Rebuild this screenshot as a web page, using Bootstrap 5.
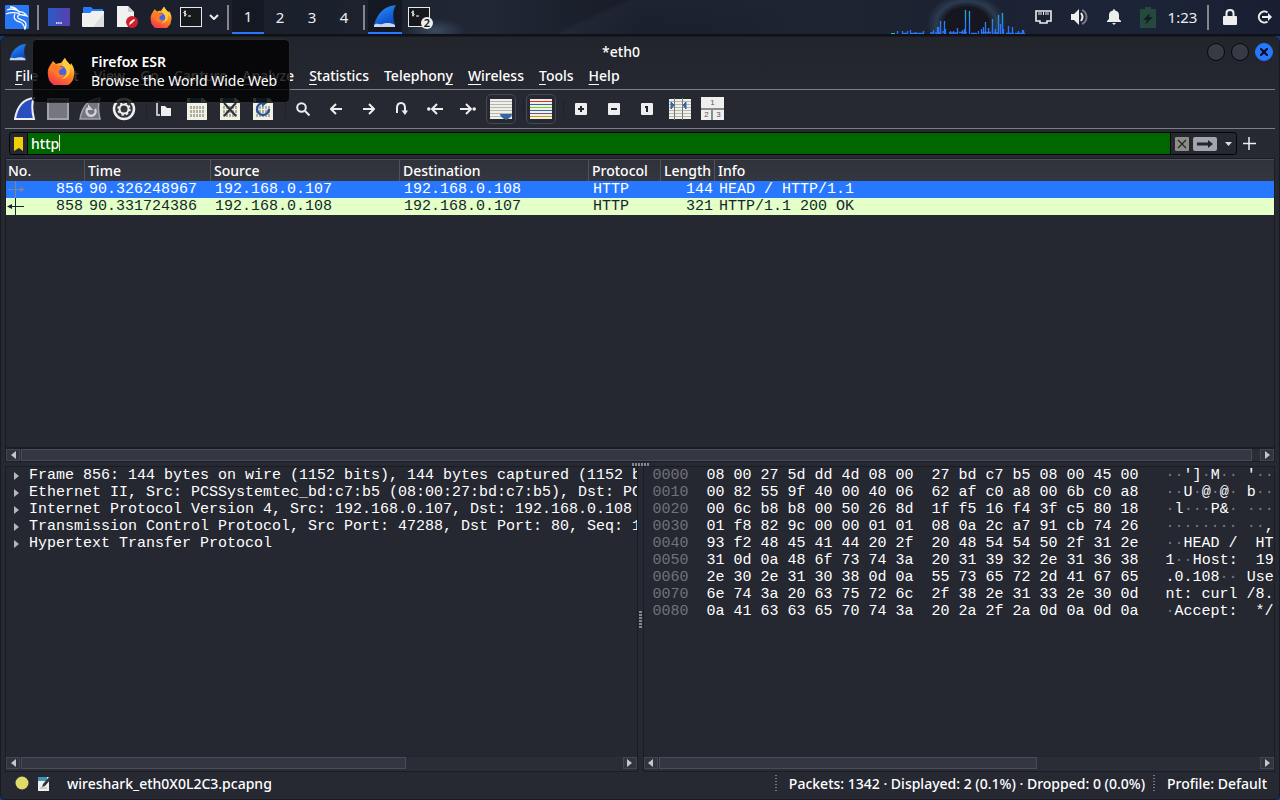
<!DOCTYPE html>
<html lang="en" data-bs-theme="dark">
<head>
<meta charset="utf-8">
<meta name="viewport" content="width=device-width, initial-scale=1">
<title>*eth0</title>
<link href="https://cdn.jsdelivr.net/npm/bootstrap@5.3.0/dist/css/bootstrap.min.css" rel="stylesheet">
<style>
:root{--win:#252731;--hair:#7c7e86;--edge:#181a21;--accent:#2777ff}
body{font-family:"Noto Sans",sans-serif;font-size:14px;line-height:18px;color:#fff;background:#15397a}
button{color:inherit;background:none;border:0;padding:0;font:inherit}
svg{display:block;flex:none}
.desk-panel{height:36px;font-size:15px;border-bottom:2px solid #101116;background:radial-gradient(ellipse 40px 30px at 75.500% 70%,#15161f 0 55%,#2b3b50 75%,transparent),radial-gradient(ellipse 30px 12px at 34% 90%,#3a4a60,transparent),linear-gradient(155deg,transparent 46%,#33425533 47%,transparent 60%),linear-gradient(90deg,#1d202c 0,#1b202d 25%,#212735 38%,#171b27 50%,#1d2532 62%,#1b2130 75%,#1c2438 88%,#191f33 100%);color:#eee}
.desk-panel .rule{width:2px;height:25px;margin:0 3px;background:#85868a}
.desk-panel .slot{display:flex;align-items:center;justify-content:center;height:34px}
.w20{width:20px}.w26{width:26px}.w32{width:32px}.w34{width:34px}.w36{width:36px}.w39{width:39px}
.slot.active{background:#141823;border-bottom:2px solid var(--accent)}
.win{background:linear-gradient(#22252c,#262832 60px);border:1px solid var(--edge);border-radius:7px 7px 5px 5px;padding:0 4px}
.titlebar{height:29px}
.win-btns{gap:6px;padding-right:2px}
.dot-btn{width:18px;height:18px;border:1px solid #08090c;border-radius:50%;background:#383b46}
.dot-btn.close-btn{background:#2777ff;border-color:#2777ff}
.menu-row{height:24px;gap:15px;padding:0 0 3px 10px;border-bottom:1px solid var(--hair)}
.menu-row,.med{font-weight:500}
.menu-row u{text-underline-offset:3px;text-decoration-thickness:1px}
.tools{height:39px;padding:0 0 1px 3px;border-bottom:1px solid var(--hair)}
.tool{width:33px;height:30px;display:flex;align-items:center;justify-content:center}
.tool.on svg{outline:1px solid #464953;outline-offset:3px;border-radius:1px}
.tools .gap-bar{width:7px;height:18px;border-right:1px solid #20222a}
.filter{margin-left:4px;height:23px;border:1px solid #050507;border-radius:3px;background:#262831;overflow:hidden}
.filter input{background:linear-gradient(#ddd,#ddd) 31px 2px/1px 16px no-repeat #060;border:0;color:#fff;padding:0 3px;font-weight:500;outline:0;min-width:0;height:21px;border-left:1px solid #050507;border-right:1px solid #050507}
.filter-row{height:29px}
.plus-btn{margin:0 19px 0 5px}
.pane-top{flex:289 1 0}.pane-low{flex:307 1 0}.pane-half{flex:1 1 0}
.view{border:1px solid #1b1d24;background:var(--win);min-width:0}
.mono{font-family:"Liberation Mono",monospace;font-size:15px;line-height:17px}
.packets{table-layout:fixed;width:100%;border-collapse:separate;border-spacing:0}
.packets th{height:22px;padding:2px 0 0 3px;font-weight:500;line-height:18px;background:linear-gradient(#2f323b,#343640);border-top:1px solid #4d4f58;border-right:1px solid #50525b;white-space:nowrap;vertical-align:top}
.packets th:first-child{padding-left:2px}
.packets th:last-child{border-right:0}
.packets td{height:17px;padding:0 0 0 4px;font:15px/17px "Liberation Mono",monospace;white-space:pre;vertical-align:top}
.packets .num{text-align:right;padding:0 2px 0 0}
.packets .sel{background:#2777ff}
.packets .resp{background:#e4ffc7;color:#12272e}
.sbar{height:14px;background:#2b2d36;border:1px solid #1b1d24}
.sbar button{width:14px;height:12px;background:#31343d;border:1px solid #454750;display:flex;align-items:center;justify-content:center}
.sbar .thumb{height:12px;background:#343741;border:1px solid #4b4d56;margin-left:1px}
.splitter-h{height:4px}.splitter-v{width:5px}
.grip-h{width:17px;height:3px;background:repeating-linear-gradient(90deg,#85878e 0 2px,transparent 2px 3px)}
.grip-v{width:3px;height:17px;background:repeating-linear-gradient(#85878e 0 2px,transparent 2px 3px)}
.tree li{display:flex;align-items:center;white-space:pre}
.tree svg{margin:0 10px 0 8px}
.hex{color:#fff;padding:0 0 0 9px;margin:0;overflow:hidden}
.hex .off{color:#70737a}.hex i{font-style:normal;color:#777a82}
.status{height:27px;padding-bottom:3px}
.dotted{width:2px;height:18px;background:repeating-linear-gradient(#777982 0 1px,transparent 1px 3px)}
.tip{position:absolute;left:32px;top:39px;width:258px;height:64px;background:#000000cc;border:1px solid #2a2b2f;border-radius:5px;padding:0 14px;line-height:19px;white-space:nowrap;z-index:5}
.count{position:absolute;left:13px;top:10px;width:12px;height:12px;border-radius:50%;background:#eee;color:#111;font-size:11px;line-height:12px;text-align:center;font-weight:600}
</style>
</head>
<body class="d-flex flex-column min-vh-100">
<svg width="0" height="0" class="position-absolute" aria-hidden="true">
<defs>
<linearGradient id="fin" x1="0" y1="0" x2="0.6" y2="1"><stop offset="0" stop-color="#2d9bff"/><stop offset="1" stop-color="#0b48c4"/></linearGradient>
<linearGradient id="fox" x1="0.8" y1="0" x2="0.3" y2="1"><stop offset="0" stop-color="#ffe14a"/><stop offset=".45" stop-color="#ff8a1f"/><stop offset="1" stop-color="#f5304f"/></linearGradient>
<linearGradient id="desk" x2="1"><stop offset="0" stop-color="#2b5ac4"/><stop offset="1" stop-color="#5a3fb0"/></linearGradient>
<linearGradient id="net" gradientUnits="userSpaceOnUse" x1="0" y1="0" x2="0" y2="20"><stop offset="0" stop-color="#1dbecb"/><stop offset="1" stop-color="#2777ff"/></linearGradient>
<symbol id="firefox" viewBox="0 0 28 28"><path d="M4 7l2-3 3 3c2-1 4-1 5-1l4-5c1 3 3 4 5 7 1-1 1-1 1-2 3 4 4 8 3 12a13 12 0 0 1-26 0C0 13 2 10 4 7z" fill="url(#fox)"/><circle cx="14.500" cy="14.500" r="5.500" fill="#4a63e0"/><path d="M2 12c2-4 5-5 7-5l3 3 4 0c0 2-3 2-4 4-1 4 3 5 7 3-3 5-12 5-12-2-2-1-4-1-5-3z" fill="#ff7b25"/><path d="M18 1c1 4 7 6 8 13-1-2-2-3-3-3 1 7-4 11-9 11 7-3 7-9 2-13-1-4 0-6 2-8z" fill="#ffcb3d"/></symbol>
<symbol id="shark" viewBox="0 0 24 24"><path d="M1 21C4 10 11 2 23 1c-4 6-3 13-1 20z" fill="url(#fin)"/><path d="M1 21c3-3 5 0 8-1s8-2 13 1v2H1z" fill="#c7d5ee"/></symbol>
<symbol id="page" viewBox="0 0 20 22"><path d="M0 0h16l4 4v18H0z" fill="#f1f1e4"/><path d="M3 0h11v4H3z" fill="#3a7896"/><path d="M4 8v3M7 8v3M10 8v3M13 8v3M16 8v3M4 12v3M7 12v3M10 12v3M13 12v3M16 12v3M4 16v3M7 16v3M10 16v3M13 16v3M16 16v3" stroke="#96978e" stroke-width="1.500"/></symbol>
<symbol id="term" viewBox="0 0 22 20"><rect x=".5" y=".5" width="21" height="19" fill="#16181b" stroke="#e8e8e8"/><path d="M6 5c-1-1-3 0-2 1l2 1c1 1-1 2-2 1M5 3.500v6M8 9h3" fill="none" stroke="#fff"/></symbol>
</defs>
</svg>

<header class="desk-panel d-flex align-items-center">
<button class="slot w34" aria-label="Applications"><svg width="26" height="26" viewBox="0 0 26 26"><rect x="1" y="1" width="24" height="24" rx="1" fill="#2878f5"/><path d="M3 6c5-2 9-1 13 2M2 10c5-2 9-2 14 0M6 3c5 0 7 2 9 5 4-1 6 1 8 4l-4-1c-4-1-6 0-5 3 1 2 5 1 7 4 2 2 1 4 0 7-1-4-2-6-5-7-5-1-7-4-5-8" fill="none" stroke="#fff" stroke-width="1.300"/></svg></button>
<span class="rule"></span>
<button class="slot w34" aria-label="Show desktop"><svg width="22" height="18" viewBox="0 0 22 18"><path d="M0 0h22v18H0z" fill="url(#desk)"/><path d="M8 15h6" stroke="#fff" stroke-width="1.500" stroke-dasharray="1.500 .7"/></svg></button>
<button class="slot w34" aria-label="Files"><svg width="22" height="20" viewBox="0 0 22 20"><path d="M1 6V1q0-1 1-1h7l2 2h10v4z" fill="#2777ff"/><path d="M0 6h8l2-2h12v15q0 1-1 1H1q-1 0-1-1z" fill="#f0f0f0"/><path d="M22 6v14H11z" fill="#ddd"/></svg></button>
<button class="slot w34" aria-label="Text editor"><svg width="22" height="24" viewBox="0 0 22 24"><path d="M1 1h11l6 6v15H1z" fill="#f1f1f1"/><path d="M12 1l6 6h-6z" fill="#ccc"/><circle cx="16" cy="17" r="6" fill="#d01e2a"/><path d="M13 20l1-3 4-3 1 1-4 4z" fill="#fff"/></svg></button>
<button class="slot w34" aria-label="Firefox ESR"><svg width="22" height="22"><use href="#firefox"/></svg></button>
<button class="slot w26" aria-label="Terminal"><svg width="22" height="20"><use href="#term"/></svg></button>
<button class="slot w20" aria-label="More terminals"><svg width="10" height="6" viewBox="0 0 10 6"><path d="M1 1l4 4 4-4" fill="none" stroke="#eee" stroke-width="2"/></svg></button>
<span class="rule"></span>
<button class="slot w32 active">1</button><button class="slot w32">2</button><button class="slot w32">3</button><button class="slot w32">4</button>
<span class="rule"></span>
<button class="slot w34 active" aria-label="Wireshark window"><svg width="24" height="24"><use href="#shark"/></svg></button>
<button class="slot w34" aria-label="Terminal windows"><span class="position-relative"><svg width="22" height="20"><use href="#term"/></svg><span class="count">2</span></span></button>
<svg class="ms-auto align-self-end" width="134" height="26" viewBox="0 0 134 26"><path fill="none" stroke="#1dbecb" d="M0 25.500h4"/><path fill="none" stroke="url(#net)" stroke-width="1.300" d="M6.500 26v-3M11.500 26v-3M12 25.500h4M16.500 26v-3M19.500 26v-4M20 25.500h13M24.500 26v-2M32.500 26v-3M39 25h4M42.500 26v-4M44 25h6M46.500 26v-7M47.500 26v-7M49.500 26v-13M51 24h4M53.500 26v-13M54.500 26v-5M58 25h8M59.500 26v-3M62.500 26v-3M66.500 26v-6M68 24.500h8M71.500 26v-4M73.500 26v-5M74.500 26V2M78.500 26V3M80 25.500h6M87.500 26v-3M90 24.500h10M90.500 26v-5M92.500 26v-7M94.500 26v-12M97.500 26v-6M101.500 26V11M103 25h5M104.500 26v-5M107.500 26V7M109.500 26v-10M111.500 26V5M112.500 26v-5M115 25.500h8M117.500 26v-8M121.500 26v-7M124 25.500h10M127.500 26v-3M131.500 26v-4M132.500 26v-4"/></svg>
<button class="slot w36" aria-label="Network"><svg width="17" height="14" viewBox="0 0 17 14"><path d="M1 1h15v10h-4v2H5v-2H1z" fill="none" stroke="#eee" stroke-width="1.600"/><path d="M4 2v3M6 2v3M8.500 2v3M11 2v3M13 2v3" stroke="#eee"/></svg></button>
<button class="slot w36" aria-label="Volume"><svg width="18" height="16" viewBox="0 0 18 16"><path d="M1 5h3l5-5v16L4 11H1z" fill="#eee"/><path d="M11 4q3 4 0 8" stroke="#eee" fill="none" stroke-width="2"/><path d="M12 1c6 3 6 11 0 14" stroke="#737780" fill="none" stroke-width="2"/></svg></button>
<button class="slot w34" aria-label="Notifications"><svg width="14" height="16" viewBox="0 0 14 16"><path d="M0 13V12l2-2V6c0-3 2-4 4-4.500Q6 0 7 0t1 1.500C10 2 12 3 12 6v4l2 2v1zM5 14h4l-2 2z" fill="#eee"/></svg></button>
<button class="slot w34" aria-label="Battery"><svg width="16" height="21" viewBox="0 0 16 21"><path d="M0 2h5V0h6v2h5v19H0z" fill="#25493f"/><path d="M10 6l-7 7h4l-2 5 8-8H9z" fill="#101d22"/></svg></button>
<span class="slot w39 pe-1">1:23</span>
<span class="rule"></span>
<button class="slot w36" aria-label="Lock"><svg width="14" height="16" viewBox="0 0 14 16"><path d="M1 7h12q1 0 1 1v7q0 1-1 1H1q-1 0-1-1V8q0-1 1-1z" fill="#eee"/><path d="M3.500 8V4q0-3 3.500-3t3.500 3v4" fill="none" stroke="#eee" stroke-width="2"/></svg></button>
<button class="slot w32" aria-label="Log out"><svg width="15" height="14" viewBox="0 0 15 14"><path d="M10.500 2.500a5.500 5.500 0 1 0 0 9" fill="none" stroke="#eee" stroke-width="2"/><path d="M5 6h6V3l4 4-4 4V8H5z" fill="#eee"/></svg></button>
</header>

<main class="win flex-grow-1 d-flex flex-column">
<div class="titlebar d-flex align-items-center">
<svg class="ms-1" width="18" height="18"><use href="#shark"/></svg>
<span class="flex-grow-1 text-center med ps-2">*eth0</span>
<span class="win-btns d-flex"><button class="dot-btn" aria-label="Minimize"></button><button class="dot-btn" aria-label="Maximize"></button><button class="dot-btn close-btn d-flex align-items-center justify-content-center" aria-label="Close"><svg width="8" height="8" viewBox="0 0 8 8"><path d="M0 0l8 8M8 0L0 8" stroke="#0a0f20" stroke-width="2.200"/></svg></button></span>
</div>
<nav class="menu-row d-flex align-items-center" aria-label="Menu">
<button><u>F</u>ile</button><button><u>E</u>dit</button><button><u>V</u>iew</button><button><u>G</u>o</button><button><u>C</u>apture</button><button><u>A</u>nalyze</button><button><u>S</u>tatistics</button><button>Telephon<u>y</u></button><button><u>W</u>ireless</button><button><u>T</u>ools</button><button><u>H</u>elp</button>
</nav>
<div class="tools d-flex align-items-center" role="toolbar">
<button class="tool" aria-label="Start capture"><svg width="22" height="24" viewBox="0 0 22 24"><path d="M1 22C3 10 9 2 20 1c-3 6-2 13 0 21z" fill="#2a4dc0" stroke="#eee" stroke-width="2"/></svg></button>
<button class="tool" aria-label="Stop capture"><svg width="22" height="22" viewBox="0 0 22 22"><rect x="1" y="1" width="20" height="20" fill="#75767f" stroke="#a3a4ab" stroke-width="2"/></svg></button>
<button class="tool" aria-label="Restart capture"><svg width="23" height="24" viewBox="0 0 23 24"><path d="M1 22C3 10 9 2 21 1c-2 6-2 13 0 21z" fill="#74757e" stroke="#a3a4ab" stroke-width="1.500"/><path d="M9 11a4.500 4.500 0 1 0 7 1" fill="none" stroke="#d2d2d6" stroke-width="2.500"/><path d="M9 7v6h5z" fill="#d2d2d6"/></svg></button>
<button class="tool" aria-label="Capture options"><svg width="24" height="24" viewBox="0 0 24 24"><circle cx="12" cy="12" r="10" fill="#33353b" stroke="#f0f0f0" stroke-width="2.500"/><circle cx="12" cy="12" r="4.500" fill="none" stroke="#f0f0f0" stroke-width="2"/><circle cx="12" cy="12" r="6" fill="none" stroke="#f0f0f0" stroke-width="1.500" stroke-dasharray="2.350 2.350"/></svg></button>
<span class="gap-bar"></span>
<button class="tool" aria-label="Open"><svg width="15" height="16" viewBox="0 0 15 16"><path d="M4 1H1v13h3" fill="none" stroke="#eee" stroke-width="1.500"/><path d="M5 5h4l2 2h4v8H5z" fill="#eee"/></svg></button>
<button class="tool" aria-label="Save"><svg width="20" height="22"><use href="#page"/></svg></button>
<button class="tool" aria-label="Close file"><svg width="20" height="22" viewBox="0 0 20 22"><use href="#page"/><path d="M4 5l12 13M16 5L4 18" stroke="#30343a" stroke-width="2.200"/></svg></button>
<button class="tool" aria-label="Reload"><svg width="20" height="22" viewBox="0 0 20 22"><use href="#page"/><path d="M10 5a6 6 0 1 0 6 6" fill="none" stroke="#2a5298" stroke-width="2.400"/><path d="M9 2l5 3-5 4z" fill="#2a5298"/></svg></button>
<span class="gap-bar"></span>
<button class="tool" aria-label="Find"><svg width="14" height="14" viewBox="0 0 14 14"><circle cx="5.500" cy="5.500" r="4.300" fill="none" stroke="#eee" stroke-width="2"/><path d="M9 9l4.500 4.500" stroke="#eee" stroke-width="2"/></svg></button>
<button class="tool" aria-label="Previous"><svg width="12" height="12" viewBox="0 0 12 12"><path d="M12 6H2M6 1L1 6l5 5" fill="none" stroke="#eee" stroke-width="2"/></svg></button>
<button class="tool" aria-label="Next"><svg width="12" height="12" viewBox="0 0 12 12"><path d="M0 6h10M6 1l5 5-5 5" fill="none" stroke="#eee" stroke-width="2"/></svg></button>
<button class="tool" aria-label="Go to packet"><svg width="12" height="13" viewBox="0 0 12 13"><path d="M1 11V6q0-5 4-5t4 5v4" fill="none" stroke="#eee" stroke-width="2"/><path d="M5.500 8.500h6.500L9 13z" fill="#eee"/></svg></button>
<button class="tool" aria-label="First packet"><svg width="16" height="12" viewBox="0 0 16 12"><path d="M16 6H6M10 1L5 6l5 5" fill="none" stroke="#eee" stroke-width="2"/><circle cx="1.800" cy="6" r="1.800" fill="#eee"/></svg></button>
<button class="tool" aria-label="Last packet"><svg width="16" height="12" viewBox="0 0 16 12"><path d="M0 6h10M6 1l5 5-5 5" fill="none" stroke="#eee" stroke-width="2"/><circle cx="14.200" cy="6" r="1.800" fill="#eee"/></svg></button>
<button class="tool on" aria-label="Auto scroll"><svg width="22" height="22" viewBox="0 0 22 22"><path d="M0 1h22v20H0z" fill="#f0f0ea"/><path d="M0 3.500h22M0 6.500h22M0 9.500h22M0 12.500h22M0 15.500h22M0 18.500h22" stroke="#b5b6b0"/><path d="M10 16h12q0 3-6 6-6-3-6-6z" fill="#3465a4"/></svg></button>
<span class="gap-bar"></span>
<button class="tool on" aria-label="Colorize"><svg width="22" height="22" viewBox="0 0 22 22"><path d="M0 1h22v20H0z" fill="#f0f0ea"/><path d="M0 3h22v1H0z" fill="#ef2929"/><path d="M0 6h22v1H0zM0 12h22v1H0z" fill="#3465a4"/><path d="M0 9h22v1H0z" fill="#73d216"/><path d="M0 15h22v1H0z" fill="#75507b"/><path d="M0 18h22v1H0z" fill="#c4a000"/></svg></button>
<span class="gap-bar"></span>
<button class="tool" aria-label="Zoom in"><svg width="12" height="12" viewBox="0 0 12 12"><rect width="12" height="12" rx="1" fill="#eee"/><path d="M6 3v6M3 6h6" stroke="#22242c" stroke-width="2"/></svg></button>
<button class="tool" aria-label="Zoom out"><svg width="12" height="12" viewBox="0 0 12 12"><rect width="12" height="12" rx="1" fill="#eee"/><path d="M3 6h6" stroke="#22242c" stroke-width="2"/></svg></button>
<button class="tool" aria-label="Normal size"><svg width="12" height="12" viewBox="0 0 12 12"><rect width="12" height="12" rx="1" fill="#eee"/><path d="M4 4h2v5" fill="none" stroke="#22242c" stroke-width="2"/></svg></button>
<button class="tool" aria-label="Resize columns"><svg width="22" height="22" viewBox="0 0 22 22"><path d="M0 1h22v20H0z" fill="#f0f0ea"/><path d="M0 3.500h22M0 6.500h22M0 9.500h22M0 12.500h22M0 15.500h22M0 18.500h22" stroke="#b5b6b0"/><path d="M5.500 0v22M13.500 0v22" stroke="#777870"/><path d="M2 4l3 3-3 4zM17 4l-3 3 3 4z" fill="#3465a4" stroke="#3465a4"/></svg></button>
<button class="tool" aria-label="Reset layout"><svg width="23" height="23" viewBox="0 0 23 23"><path d="M0 0h23v11H0zM0 13h10v10H0zM12 13h11v10H12z" fill="#efefef"/><path d="M0 12h23M11 12v11" stroke="#8b8c8c" stroke-width="2"/><g fill="#555" font-size="8" font-family="Liberation Sans" text-anchor="middle"><text x="11.500" y="8">1</text><text x="5.500" y="20">2</text><text x="17.500" y="20">3</text></g></svg></button>
</div>
<div class="filter-row d-flex align-items-center">
<div class="filter flex-grow-1 d-flex align-items-center">
<button class="px-1" aria-label="Filter bookmarks"><svg width="9" height="14" viewBox="0 0 9 14"><path d="M0 0h9v14l-4-3-5 3z" fill="#f0d000"/></svg></button>
<input class="flex-grow-1" id="dfilter" value="http" aria-label="Display filter">
<button class="ms-1" aria-label="Clear filter"><svg width="14" height="14" viewBox="0 0 14 14"><rect width="14" height="14" rx="1" fill="#8d8e86"/><path d="M3 3l8 8M11 3l-8 8" stroke="#22242a" stroke-width="1.200"/></svg></button>
<button class="ms-1 me-2" aria-label="Apply filter"><svg width="24" height="14" viewBox="0 0 24 14"><rect width="24" height="14" rx="2" fill="#a2a4b0"/><path d="M4 5.500h11V3l5 4-5 4V8.500H4z" fill="#22252d"/></svg></button>
<button class="me-1" aria-label="Filter history"><svg width="7" height="4" viewBox="0 0 7 4"><path d="M0 0h7L3.500 4z" fill="#ddd"/></svg></button>
</div>
<button class="plus-btn" aria-label="Add filter button"><svg width="14" height="13" viewBox="0 0 14 13"><path d="M7 0v13M1 6.500h13" stroke="#eee" stroke-width="1.500"/></svg></button>
</div>

<section class="view pane-top overflow-hidden" aria-label="Packet list">
<table class="packets">
<colgroup><col style="width:79px"><col style="width:126px"><col style="width:189px"><col style="width:189px"><col style="width:72px"><col style="width:54px"><col></colgroup>
<thead><tr><th>No.</th><th>Time</th><th>Source</th><th>Destination</th><th>Protocol</th><th>Length</th><th>Info</th></tr></thead>
<tbody>
<tr class="sel"><td class="num"><svg class="float-start" width="21" height="17" viewBox="0 0 21 17"><path d="M9.500 0v17M2 8.500h14" stroke="#7f8594"/><path d="M14 6l5 2.500-5 2.500z" fill="#7f8594"/></svg>856</td><td>90.326248967</td><td>192.168.0.107</td><td>192.168.0.108</td><td>HTTP</td><td class="num">144</td><td>HEAD / HTTP/1.1</td></tr>
<tr class="resp"><td class="num"><svg class="float-start" width="21" height="17" viewBox="0 0 21 17"><path d="M9.500 0v17M4 8.500h14" stroke="#12272e"/><path d="M6 6L1 8.500 6 11z" fill="#12272e"/></svg>858</td><td>90.331724386</td><td>192.168.0.108</td><td>192.168.0.107</td><td>HTTP</td><td class="num">321</td><td>HTTP/1.1 200 OK</td></tr>
</tbody>
</table>
</section>
<div class="sbar d-flex"><button aria-label="Scroll left"><svg width="5" height="8" viewBox="0 0 5 8"><path d="M5 0v8L0 4z" fill="#c5c6ca"/></svg></button><div class="thumb flex-grow-1 me-2"></div><button aria-label="Scroll right"><svg width="5" height="8" viewBox="0 0 5 8"><path d="M0 0v8l5-4z" fill="#c5c6ca"/></svg></button></div>
<div class="splitter-h d-flex justify-content-center align-items-end"><div class="grip-h"></div></div>

<div class="pane-low d-flex">
<section class="view pane-half d-flex flex-column overflow-hidden" aria-label="Packet details">
<ul class="tree mono list-unstyled mb-0 flex-grow-1">
<li><svg width="5" height="8" viewBox="0 0 5 8"><path d="M0 0v8l5-4z" fill="#b5b6bb"/></svg>Frame 856: 144 bytes on wire (1152 bits), 144 bytes captured (1152 b</li>
<li><svg width="5" height="8" viewBox="0 0 5 8"><path d="M0 0v8l5-4z" fill="#b5b6bb"/></svg>Ethernet II, Src: PCSSystemtec_bd:c7:b5 (08:00:27:bd:c7:b5), Dst: PC</li>
<li><svg width="5" height="8" viewBox="0 0 5 8"><path d="M0 0v8l5-4z" fill="#b5b6bb"/></svg>Internet Protocol Version 4, Src: 192.168.0.107, Dst: 192.168.0.108</li>
<li><svg width="5" height="8" viewBox="0 0 5 8"><path d="M0 0v8l5-4z" fill="#b5b6bb"/></svg>Transmission Control Protocol, Src Port: 47288, Dst Port: 80, Seq: 1</li>
<li><svg width="5" height="8" viewBox="0 0 5 8"><path d="M0 0v8l5-4z" fill="#b5b6bb"/></svg>Hypertext Transfer Protocol</li>
</ul>
<div class="sbar d-flex border-0"><button aria-label="Scroll left"><svg width="5" height="8" viewBox="0 0 5 8"><path d="M5 0v8L0 4z" fill="#c5c6ca"/></svg></button><div class="thumb" style="width:61%"></div><button class="ms-auto" aria-label="Scroll right"><svg width="5" height="8" viewBox="0 0 5 8"><path d="M0 0v8l5-4z" fill="#c5c6ca"/></svg></button></div>
</section>
<div class="splitter-v d-flex align-items-center justify-content-center"><div class="grip-v"></div></div>
<section class="view pane-half d-flex flex-column overflow-hidden" aria-label="Packet bytes">
<pre class="hex mono flex-grow-1"><span class="off">0000</span>  08 00 27 5d dd 4d 08 00  27 bd c7 b5 08 00 45 00   <i>··</i>']<i>·</i>M<i>··</i> '<i>··</i>
<span class="off">0010</span>  00 82 55 9f 40 00 40 06  62 af c0 a8 00 6b c0 a8   <i>··</i>U<i>·</i>@<i>·</i>@<i>·</i> b<i>··</i>
<span class="off">0020</span>  00 6c b8 b8 00 50 26 8d  1f f5 16 f4 3f c5 80 18   <i>·</i>l<i>···</i>P&amp;<i>·</i> <i>···</i>
<span class="off">0030</span>  01 f8 82 9c 00 00 01 01  08 0a 2c a7 91 cb 74 26   <i>········</i> <i>··</i>,
<span class="off">0040</span>  93 f2 48 45 41 44 20 2f  20 48 54 54 50 2f 31 2e   <i>··</i>HEAD /  HT
<span class="off">0050</span>  31 0d 0a 48 6f 73 74 3a  20 31 39 32 2e 31 36 38   1<i>··</i>Host:  19
<span class="off">0060</span>  2e 30 2e 31 30 38 0d 0a  55 73 65 72 2d 41 67 65   .0.108<i>··</i> Use
<span class="off">0070</span>  6e 74 3a 20 63 75 72 6c  2f 38 2e 31 33 2e 30 0d   nt: curl /8.
<span class="off">0080</span>  0a 41 63 63 65 70 74 3a  20 2a 2f 2a 0d 0a 0d 0a   <i>·</i>Accept:  */</pre>
<div class="sbar d-flex border-0"><button aria-label="Scroll left"><svg width="5" height="8" viewBox="0 0 5 8"><path d="M5 0v8L0 4z" fill="#c5c6ca"/></svg></button><div class="thumb" style="width:60%"></div><button class="ms-auto" aria-label="Scroll right"><svg width="5" height="8" viewBox="0 0 5 8"><path d="M0 0v8l5-4z" fill="#c5c6ca"/></svg></button></div>
</section>
</div>
<footer class="status d-flex align-items-center med">
<button class="ms-2 me-2" aria-label="Expert information"><svg width="16" height="16" viewBox="0 0 16 16"><circle cx="9" cy="7" r="6.500" fill="#dfdb6a"/></svg></button>
<button aria-label="Capture comment"><svg width="14" height="16" viewBox="0 0 14 16"><path d="M1 1h11v14H1z" fill="#f1f1ec"/><path d="M1 1h9v4H1z" fill="#3d95b8"/><path d="M5 11l1-3 6-7 2 2-6 7z" fill="#30343a"/><path d="M3 12h7" stroke="#aaa"/></svg></button>
<span class="ms-3">wireshark_eth0X0L2C3.pcapng</span>
<span class="dotted ms-auto me-2"></span>
<span class="me-2 ps-1">Packets: 1342 · Displayed: 2 (0.1%) · Dropped: 0 (0.0%)</span>
<span class="dotted me-2"></span>
<span class="ps-1 pe-2">Profile: Default</span>
</footer>
</main>
<div class="tip d-flex align-items-center" role="tooltip"><svg width="28" height="28" class="me-3"><use href="#firefox"/></svg><div><div class="fw-semibold">Firefox ESR</div><div>Browse the World Wide Web</div></div></div>
<script src="https://cdn.jsdelivr.net/npm/bootstrap@5.3.0/dist/js/bootstrap.bundle.min.js"></script>
</body>
</html>
